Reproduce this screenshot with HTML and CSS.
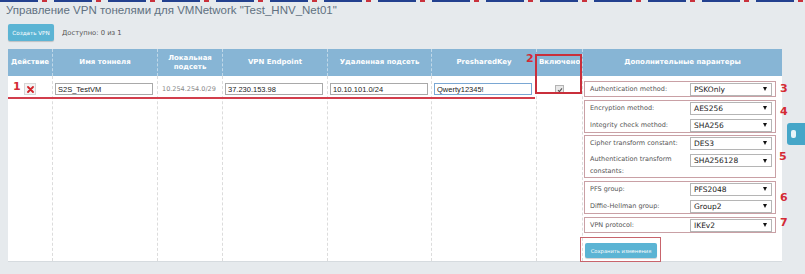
FILE: index.html
```html
<!DOCTYPE html>
<html lang="ru">
<head>
<meta charset="UTF-8">
<meta name="viewport" content="width=device-width, initial-scale=1.0">
<title>VPN тонели</title>
<link rel="stylesheet" href="styles.css">
</head>
<body>

<div class="topline"></div>
<h1 class="title">Управление VPN тонелями для VMNetwork "Test_HNV_Net01"</h1>

<div class="toolbar">
  <button class="btn btn-create">Создать VPN</button>
  <span class="quota">Доступно: 0 из 1</span>
</div>

<div class="panel">
  <table class="vpn-table">
    <colgroup>
      <col class="c-act">
      <col class="c-name">
      <col class="c-local">
      <col class="c-endpoint">
      <col class="c-remote">
      <col class="c-key">
      <col class="c-on">
      <col class="c-params">
    </colgroup>
    <thead>
      <tr>
        <th>Действие</th>
        <th>Имя тоннеля</th>
        <th>Локальная<br>подсеть</th>
        <th>VPN Endpoint</th>
        <th>Удаленная подсеть</th>
        <th>PresharedKey</th>
        <th>Включено</th>
        <th>Дополнительные парантеры</th>
      </tr>
    </thead>
    <tbody>
      <tr>
        <td class="cell-act">
          <span class="del">
            <svg width="7" height="7" viewBox="0 0 7 7"><path d="M1 1 L6 6 M6 1 L1 6" stroke="#d2232a" stroke-width="1.8" stroke-linecap="round"/></svg>
          </span>
        </td>
        <td><input class="field" type="text" value="S2S_TestVM"></td>
        <td class="cell-local">10.254.254.0/29</td>
        <td><input class="field" type="text" value="37.230.153.98"></td>
        <td><input class="field" type="text" value="10.10.101.0/24"></td>
        <td><input class="field field-focus" type="text" value="Qwerty12345!"></td>
        <td class="cell-on">
          <span class="check">
            <svg width="6" height="6" viewBox="0 0 6 6"><path d="M1 3.2 L2.4 4.6 L5 1.4" fill="none" stroke="#555" stroke-width="1.1"/></svg>
          </span>
        </td>
        <td class="cell-params">
          <div class="group">
            <div class="prow">
              <span class="plabel">Authentication method:</span>
              <div class="select"><span>PSKOnly</span><i class="arrow"></i></div>
            </div>
          </div>
          <div class="group">
            <div class="prow">
              <span class="plabel">Encryption method:</span>
              <div class="select"><span>AES256</span><i class="arrow"></i></div>
            </div>
            <div class="prow">
              <span class="plabel">Integrity check method:</span>
              <div class="select"><span>SHA256</span><i class="arrow"></i></div>
            </div>
          </div>
          <div class="group group-tight">
            <div class="prow">
              <span class="plabel">Cipher transform constant:</span>
              <div class="select"><span>DES3</span><i class="arrow"></i></div>
            </div>
            <div class="prow prow-wrap">
              <span class="plabel">Authentication transform constants:</span>
              <div class="select"><span>SHA256128</span><i class="arrow"></i></div>
            </div>
          </div>
          <div class="group">
            <div class="prow">
              <span class="plabel">PFS group:</span>
              <div class="select"><span>PFS2048</span><i class="arrow"></i></div>
            </div>
            <div class="prow">
              <span class="plabel">Diffie-Hellman group:</span>
              <div class="select"><span>Group2</span><i class="arrow"></i></div>
            </div>
          </div>
          <div class="group">
            <div class="prow">
              <span class="plabel">VPN protocol:</span>
              <div class="select"><span>IKEv2</span><i class="arrow"></i></div>
            </div>
          </div>
          <button class="btn btn-save">Сохранить изменения</button>
        </td>
      </tr>
    </tbody>
  </table>

  <!-- annotations drawn over the screenshot -->
  <span class="mark mark-1">1</span>
  <span class="mark mark-2">2</span>
  <span class="mark mark-3">3</span>
  <span class="mark mark-4">4</span>
  <span class="mark mark-5">5</span>
  <span class="mark mark-6">6</span>
  <span class="mark mark-7">7</span>
  <div class="hl-line"></div>
  <div class="hl-box hl-on"></div>
  <div class="hl-box hl-save"></div>
</div>

<div class="side-tab"><i></i></div>

</body>
</html>
```

FILE: styles.css
```css
body {
  margin: 0;
  width: 805px;
  height: 274px;
  overflow: hidden;
  position: relative;
  background: #e6eaed;
  font-family: "DejaVu Sans", Verdana, sans-serif;
  font-size: 7px;
  color: #555;
}

.topline {
  height: 2px;
  background: repeating-linear-gradient(90deg, #23418f 0 38px, transparent 38px 42px, #c9313b 42px 47px, transparent 47px 54px);
}

.title {
  margin: 0;
  padding: 1px 0 0 6px;
  font: normal 11.5px/14px "Liberation Sans", Arial, sans-serif;
  color: #617181;
}

.toolbar {
  display: flex;
  align-items: center;
  gap: 8px;
  height: 17px;
  margin: 7px 0 0 8px;
}

.btn {
  padding: 0;
  border: 0;
  border-radius: 2px;
  background: #5bb4d4;
  color: #fff;
  font-family: "DejaVu Sans", sans-serif;
  font-size: 5.6px;
  box-shadow: 0 1px 1px rgba(0, 0, 0, .18);
}
.btn-create {
  width: 46px;
  height: 17px;
}
.btn-save {
  display: block;
  width: 72px;
  height: 15px;
  margin: 10px 0 0 1px;
  font-size: 5.2px;
}

.quota {
  font-size: 6.8px;
  color: #555;
}

.panel {
  position: relative;
  width: 774px;
  margin: 8px 0 0 8px;
}

.vpn-table {
  width: 774px;
  table-layout: fixed;
  border-collapse: separate;
  border-spacing: 0;
  background: #fff;
  border-bottom: 1px solid #d6dbdf;
}
.c-act { width: 44px; }
.c-name { width: 105px; }
.c-local { width: 65px; }
.c-endpoint { width: 105px; }
.c-remote { width: 104px; }
.c-key { width: 105px; }
.c-on { width: 46px; }
.c-params { width: 200px; }

.vpn-table th {
  height: 27px;
  padding: 0 2px;
  background: #87b5d5;
  color: #fff;
  font-size: 7px;
  line-height: 9px;
  font-weight: bold;
  text-align: center;
  border-left: 1px dashed #c0d8e8;
}
.vpn-table th:first-child,
.vpn-table td:first-child {
  border-left: 0;
}

.vpn-table td {
  vertical-align: top;
  padding: 7px 2px 0;
  border-left: 1px dashed #dcdcdc;
}

.field {
  box-sizing: border-box;
  display: block;
  width: 98px;
  height: 12px;
  margin: 0;
  padding: 0 2px;
  border: 1px solid #a9a9a9;
  font: 7.5px "Liberation Sans", Arial, sans-serif;
  color: #222;
  background: #fff;
}
.field-focus {
  border-color: #7aa7d3;
}

.cell-act {
  text-align: center;
}
.del {
  display: inline-flex;
  align-items: center;
  justify-content: center;
  width: 10px;
  height: 10px;
  border: 1px solid #d6d6d6;
  background: #f3f3f3;
}

.vpn-table td.cell-local {
  padding-left: 4px;
  line-height: 12px;
  font-size: 6.5px;
  color: #888;
}

.cell-on {
  text-align: center;
}
.check {
  display: inline-flex;
  align-items: center;
  justify-content: center;
  width: 7px;
  height: 7px;
  margin-top: 2px;
  border: 1px solid #b3b3b3;
  background: #e8e8e8;
}

.vpn-table td.cell-params {
  padding: 5px 6px 3px 1px;
}

.group {
  border: 1px solid #c9a0a5;
  padding: 0 3px 0 5px;
  margin-bottom: 3px;
}
.group-tight {
  margin-top: -1px;
}

.prow {
  display: flex;
  align-items: center;
  min-height: 14px;
}
.prow + .prow {
  margin-top: 3px;
}
.prow-wrap {
  align-items: flex-start;
}
.plabel {
  flex: 1;
  font-size: 6.5px;
  line-height: 12px;
  color: #555;
}

.select {
  box-sizing: border-box;
  display: flex;
  align-items: center;
  justify-content: space-between;
  width: 82px;
  height: 13px;
  padding: 0 4px 0 3px;
  border: 1px solid #b5b5b5;
  background: #fff;
  font-size: 7.5px;
  color: #1a1a1a;
}
.prow-wrap .select {
  margin-top: 1px;
}
.arrow {
  width: 0;
  height: 0;
  border-left: 2px solid transparent;
  border-right: 2px solid transparent;
  border-top: 4px solid #111;
}

.mark {
  position: absolute;
  font: bold 11px/11px "DejaVu Sans", sans-serif;
  color: #d42a35;
}
.mark-1 { left: 5px; top: 32px; }
.mark-2 { left: 518px; top: 4px; }
.mark-3 { left: 772px; top: 34px; }
.mark-4 { left: 772px; top: 57px; }
.mark-5 { left: 771px; top: 102px; }
.mark-6 { left: 772px; top: 143px; }
.mark-7 { left: 772px; top: 168px; }

.hl-line {
  position: absolute;
  left: 0;
  top: 48px;
  width: 527px;
  height: 2px;
  background: #d23e4c;
}
.hl-box {
  position: absolute;
  box-sizing: border-box;
}
.hl-on {
  left: 527px;
  top: 5px;
  width: 47px;
  height: 40px;
  border: 2px solid #c92f3b;
}
.hl-save {
  left: 572px;
  top: 188px;
  width: 81px;
  height: 25px;
  border: 1px solid #c8646c;
}

.side-tab {
  position: absolute;
  right: 0;
  top: 123px;
  width: 18px;
  height: 22px;
  border-radius: 3px 0 0 3px;
  background: #45a6c8;
}
.side-tab i {
  position: absolute;
  left: 4px;
  top: 7px;
  width: 5px;
  height: 8px;
  border-radius: 2px;
  background: #e8f4f9;
}
```
